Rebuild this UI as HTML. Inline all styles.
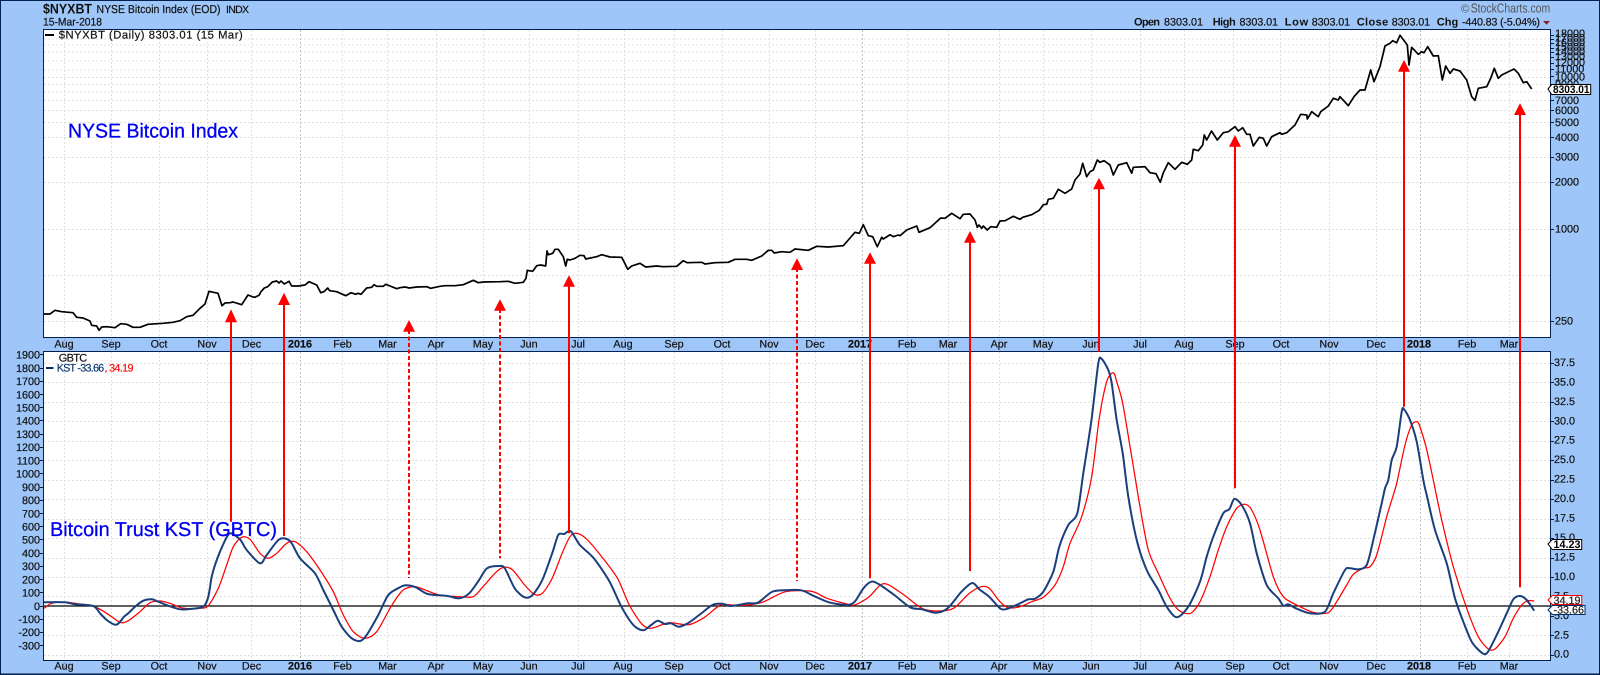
<!DOCTYPE html>
<html><head><meta charset="utf-8"><title>$NYXBT</title>
<style>
html,body{margin:0;padding:0;background:#9fc6f9;width:1600px;height:675px;overflow:hidden}
svg{display:block;font-family:"Liberation Sans",Arial,sans-serif;text-rendering:geometricPrecision}
.g{fill:none;stroke:#e0e0e0;stroke-width:1;stroke-dasharray:2 2}
.y{fill:none;stroke:#c0c0c0;stroke-width:1;stroke-dasharray:2 2}
.a text,.a{font-size:10.8px;fill:#111;stroke:#111;stroke-width:.2px}
.t{stroke:#111;stroke-width:.2px}
.m{text-anchor:middle}
.r{text-anchor:end}
.b{font-weight:bold}
.ar{fill:#f00}
.sh{stroke:#f00;stroke-width:2;fill:none}
.da{stroke-dasharray:4 2.5}
.big{stroke:#0000f0;stroke-width:.3px}
</style></head><body>
<svg width="1600" height="675" viewBox="0 0 1600 675" xmlns="http://www.w3.org/2000/svg">
<rect x="0" y="0" width="1600" height="675" fill="#9fc6f9"/>
<rect x="0.5" y="0.5" width="1599" height="673.5" fill="none" stroke="#002050" stroke-width="1"/>
<line x1="0" y1="674.5" x2="1600" y2="674.5" stroke="#002050" stroke-width="1"/>

<!-- panels -->
<rect x="43.5" y="29.5" width="1507" height="308" fill="#fff" stroke="#002050" stroke-width="1"/>
<rect x="43.5" y="351.5" width="1507" height="309" fill="#fff" stroke="#002050" stroke-width="1"/>

<!-- grid upper -->
<path class="g" d="M44 39H1550M44 45H1550M44 52H1550M44 61H1550M44 70H1550M44 77.5H1550M44 84.5H1550M44 92H1550M44 100.5H1550M44 110.5H1550M44 122.5H1550M44 137.5H1550M44 157.5H1550M44 182.5H1550M44 229.5H1550M44 275.5H1550M44 321.5H1550"/>
<path class="g" d="M64.5 30V337M111.5 30V337M159.5 30V337M207.5 30V337M251.5 30V337M342.5 30V337M387.5 30V337M436.5 30V337M483.5 30V337M529.5 30V337M578.5 30V337M624.5 30V337M674.5 30V337M722.5 30V337M769.5 30V337M815.5 30V337M907.5 30V337M948.5 30V337M999.5 30V337M1043.5 30V337M1091.5 30V337M1140.5 30V337M1184.5 30V337M1233.5 30V337M1280.5 30V337M1329.5 30V337M1376.5 30V337M1467.5 30V337M1509.5 30V337"/>
<path class="y" d="M300.5 30V337M862.5 30V337M1420.5 30V337"/>
<!-- grid lower -->
<path class="g" d="M44 363.5H1550M44 382.5H1550M44 402.5H1550M44 421.5H1550M44 441.5H1550M44 460.5H1550M44 480.5H1550M44 499.5H1550M44 519.5H1550M44 538.5H1550M44 558.5H1550M44 577.5H1550M44 596.5H1550M44 616.5H1550M44 635.5H1550M44 655.5H1550"/>
<path class="g" d="M64.5 352V660M111.5 352V660M159.5 352V660M207.5 352V660M251.5 352V660M342.5 352V660M387.5 352V660M436.5 352V660M483.5 352V660M529.5 352V660M578.5 352V660M624.5 352V660M674.5 352V660M722.5 352V660M769.5 352V660M815.5 352V660M907.5 352V660M948.5 352V660M999.5 352V660M1043.5 352V660M1091.5 352V660M1140.5 352V660M1184.5 352V660M1233.5 352V660M1280.5 352V660M1329.5 352V660M1376.5 352V660M1467.5 352V660M1509.5 352V660"/>
<path class="y" d="M300.5 352V660M862.5 352V660M1420.5 352V660"/>

<!-- zero line -->
<line x1="44" y1="606" x2="1550" y2="606" stroke="#000" stroke-width="1.2"/>

<!-- price line -->
<polyline fill="none" stroke="#000" stroke-width="1.7" stroke-linejoin="round" points="44,314 50,314 55,310.3 61.7,311.7 73,312.7 76.7,317.3 83,318 90,321 91.7,325.3 96.7,326 99,330.3 101.7,327 106.7,326.7 115,327.7 120.7,323.7 126.7,324.3 133,327.3 140,327.3 148,324.3 163,323.3 173,322.3 180,320.7 186.7,316.7 193,315.3 200,308.3 205,304 209,291.3 218,293.3 222,305.7 225,303 230,302.7 233,302 241.7,304.7 248,295 253,297 255,297.3 259,295.3 261,291.7 264.3,288 267.7,286.7 272.3,282 276.7,281 279,283 281,281 284.3,284 289,281.3 291.7,286 298.3,286 305,285 309,281.7 316.7,285 320.7,292.7 324,291.7 327.7,288 329.7,290.7 336.7,291.7 345.7,295.7 351,292.7 355.7,294.3 358,293.3 361,294.3 366.7,288 371.7,287.3 374,284.7 376.7,286.3 383.3,286.3 385.7,284.3 390,286 396.7,288.7 400,287.7 405,287 409.3,288 416.7,287 426.7,286.7 430.7,288.3 440,286.3 445,285.7 455,285.7 463.3,284.7 473.3,280.3 478.3,282.7 483.3,282 500,281.7 508.3,281.3 515,283.3 523.3,282.3 526,278.3 527.3,270.3 532.7,271.3 536.7,265.7 540.7,265 545.7,266 547,251 548.3,254.7 552.7,253.3 555,249.3 558.3,249.3 563.3,256.7 565.7,266 567.3,259.3 570,260 575,258.3 580,255.3 584,255.7 585.7,259 596.7,256.7 601.7,254.7 610,257 621.7,257.3 624,261.7 627.7,269.3 631.7,266 640,263.3 645.7,267 656.7,266 663,266.7 676.7,266.3 683.3,260.7 687.3,262.7 701.7,262.3 705,264 715,262.7 728.3,262.3 735,259.3 746.7,259.3 751.7,260.3 761.7,256 768.3,250.3 771.7,250.3 774.3,253 781.7,251.7 790,252.3 795,249 808.3,250.3 816.7,246.3 828.3,247 843.3,245.7 848.3,240 855,232.3 859.3,233.3 863.3,224.7 868.3,235.7 872.7,236.7 877.3,246.7 881.7,237.3 883.3,239 890,234.7 893.3,236.7 898.3,235 900,235.7 906.7,230 916.7,226 919,232.3 930,227.7 940.7,218 945,218.3 951.7,213.3 960,218.7 963.3,214.3 970,214 975,220 977.3,227.3 979,225 981.7,228.3 983.3,226 987.3,230 990.7,226.7 996.7,227.3 1000,221 1005,220.7 1013.3,216.3 1020,219.3 1022.7,217.3 1031.7,214.7 1039.3,210.3 1043.3,204.7 1046.7,204.3 1048.3,199.3 1053.3,198.3 1058.3,189.3 1065,193.3 1071.7,189 1075,180 1080,174 1082.7,163.3 1086.7,176.7 1090,171.7 1093.3,170 1097.3,160 1100,162.3 1104,160.7 1110,165 1113.3,175 1118.3,165 1126.7,162.7 1131.7,173.3 1133.3,167.3 1145,166.7 1150,172.7 1156,173.7 1160.3,182.3 1163.3,172.7 1168.3,162.7 1175,169.3 1181.7,162.3 1187.3,164.3 1191.7,160 1193.3,149.3 1198.3,150.7 1202.7,145 1204.3,135 1206.7,140 1211.5,131 1217.3,140 1223.3,132.7 1228.3,131.7 1235,126.7 1238.3,131 1242.7,127.7 1246.7,134.3 1250,134.3 1253.3,146 1259.3,137.3 1263.3,138.3 1266.7,146 1271.7,136.7 1280,132.7 1281.7,134.3 1286.7,132.7 1295,125 1300.7,114.3 1306.7,115 1307.3,119 1311.7,111.7 1318.3,116.7 1320.7,111.7 1328.3,106 1333.3,98.3 1338.3,100 1340,96.7 1348.3,105.7 1354,96.7 1360,90 1365,90 1370.7,70 1374,81.7 1380,66.7 1385,46 1390,43.3 1392.7,40.7 1396.7,42.7 1400,35.3 1407.3,45 1409,65 1411.7,47.3 1418.3,54.3 1421.7,51.7 1424,52.7 1427.7,46.7 1433.3,56 1438.3,55.7 1442.3,80 1445.7,66 1450,73.3 1453.3,69 1460,71 1466.7,80 1471.7,96.7 1475,100.3 1478.3,88.3 1486.7,86.7 1490.7,78.3 1494.3,68.3 1498.3,78.3 1501.7,75 1514,69 1518.3,73.3 1523.3,82.7 1526.7,81.7 1531.7,89"/>

<!-- red KST signal -->
<polyline class="sm" fill="none" stroke="#f00" stroke-width="1.25" stroke-linejoin="round" points="44,608.3 50,604 56.7,602.3 66.7,602.3 80,604 93.3,606 106.7,613.3 120,622.3 128.3,620.7 140,611.7 150,602.7 160,601 170,603.3 183.3,608.3 200,608.3 208.3,605.7 218.3,588.3 226.7,565 233.3,546.7 241.7,537.3 250,539.3 260,553.3 268.3,558.3 276.7,553.3 286.7,543.3 295,541.7 306.7,551.7 320,570 333.3,591.7 343.3,615 353.3,631.7 365,638.3 376.7,631.7 390,608.3 400,593.3 406,588.3 415.8,586.7 427.7,591 439.5,595 459.3,596.7 473.2,596.7 483,586.7 494.9,573.3 503.6,567.3 512.7,570 524.6,585 534.4,594.3 542.3,593.3 552.2,578.3 562.1,553.3 570,536.7 576,533.3 585.8,538.3 601.7,556.7 617.5,578.3 629.3,605 641.2,623.3 649.1,628.3 657,626.7 668.9,622.7 688.7,624.7 704.5,617.3 720.3,605 732.1,605 748,605 763.8,601.7 785.5,591.7 811.2,591.3 827,598.3 846.8,604 854.7,605 868.6,597.3 880.4,585 888.3,584.7 904.1,595 921.9,608.3 937.8,611 953.6,608.3 969.4,593.3 981.3,586.7 989.2,588.3 1000,601.7 1008.3,607.7 1020,606.7 1031.7,601.7 1043.3,597.3 1055,585 1063.3,566.7 1070,543.3 1081.7,516.7 1091.7,476.7 1099,420 1106.7,381.7 1113.3,372.7 1116.7,381.7 1122.7,403.3 1131.7,456.7 1140,506.7 1148.3,550 1158.3,573.3 1168.3,595 1176.7,608.3 1185,613.3 1191.7,612.7 1200,601.7 1210,576.7 1218.3,550 1226.7,526.7 1236.7,508.3 1245,504.3 1251.7,510 1260,530 1273.3,576.7 1283.3,596.7 1296.7,605 1313.3,612.3 1328.3,612.7 1336.7,601.7 1346.7,585 1353.3,574.3 1363.3,568.3 1370,566.7 1376.7,555 1386.7,516.7 1390.7,503.3 1396.7,483.3 1405,445 1411.7,425 1416.7,421.7 1419.3,425 1426,446.7 1433.3,480 1441.7,520 1453.3,566.7 1466.7,608.3 1478.3,636.7 1488.3,649 1495,649 1505,636.7 1513.3,618.3 1521.7,605 1528.3,600.7 1534.3,601"/>

<!-- navy KST -->
<polyline class="sm" fill="none" stroke="#1a3f7c" stroke-width="2" stroke-linejoin="round" points="44,602.3 65,602.3 75,604.3 93.3,606 100,613.3 106.7,620 115,624.7 119.3,622.7 124,616.7 128.3,613.3 135,606.7 143.3,600.7 151.7,599.3 158.3,601.7 168.3,605.7 180,609.3 190,609 203.3,606.7 208.3,596.7 211.7,576.7 215,565 220,551.7 226.7,537.3 230.7,533.3 240,539.3 246.7,550 260,563.3 266.7,555 279.3,539.3 290,541 300,558.3 315,573.3 323.3,590 333.3,610 341.7,626.7 351.7,638.3 360,641 366.7,635 378.3,615 388.3,595 400,587.3 406,585.3 415.8,587.3 427.7,594 447.4,596 459.3,598.3 469.2,593.3 479.1,580 487,568.3 498.9,566 504.8,568.3 514.7,588.3 524.6,597.3 532.5,595 542.3,580 552.2,553.3 558.2,535 564.1,534 570.8,531.3 579.9,545 593.8,558.3 609.6,581.7 621.4,606.7 633.3,625 643.2,630.3 651.1,625 657.8,620.7 664.9,624 670.9,623.3 678.8,626.7 688.7,622.7 700.5,614 712.4,605 722.3,603.7 730.2,606 748,603.3 757.8,602.7 771.7,592 783.5,590.3 801.3,590.3 813.2,595.7 829,602.3 846.8,605 854.7,601.7 863.4,588.3 871.3,581.7 878.5,584 894.3,595 910.1,607.3 921.9,609.3 935.8,612.7 947.6,608.3 961.5,591.7 972.2,583 979.3,589.3 989.2,596.7 1000,608.3 1006.7,609 1020,603.3 1028.3,599.3 1035,598.7 1043.3,591.7 1053.3,571.7 1059.3,546.7 1068.3,525 1077.3,513.3 1083.3,473.3 1091.7,418.3 1098.3,363.3 1101.7,359 1108.3,370 1111.7,383.3 1116.7,420 1122.7,453.3 1128.3,496.7 1136.7,540 1146.7,570 1158.3,590 1166.7,606.7 1176.7,617.3 1188.3,606.7 1200,581.7 1206.7,556.7 1213.3,536.7 1223.3,513.3 1229.3,509.3 1234.3,499 1241.7,505 1250,523.3 1256.7,553.3 1266.7,585 1278.3,598.3 1283.3,605.7 1288.3,604.3 1296.7,608.7 1310,613.3 1325,611.7 1333.3,593.3 1345,570 1350,568.3 1358.3,569.3 1366.7,565 1373.3,540 1381.7,503.3 1385,488.3 1388.3,480 1391.7,460 1396.7,446.7 1401.7,411.7 1404,409.3 1410,420 1416.7,441.7 1423.3,480 1426.7,495 1435,530 1446.7,563.3 1455,598.3 1463.3,621.7 1471.7,641.7 1481.7,652.7 1487.3,652.7 1496.7,635 1506.7,613.3 1513.3,599.3 1520,596 1526.7,600 1534.3,610.7"/>

<!-- ticks -->
<path fill="none" stroke="#002050" stroke-width="1" d="M40 354.5h3M40 368.5h3M40 381.5h3M40 394.5h3M40 407.5h3M40 420.5h3M40 434.5h3M40 447.5h3M40 460.5h3M40 473.5h3M40 487.5h3M40 500.5h3M40 513.5h3M40 526.5h3M40 539.5h3M40 553.5h3M40 566.5h3M40 579.5h3M40 592.5h3M40 606.5h3M40 619.5h3M40 632.5h3M40 645.5h3"/>
<path fill="none" stroke="#002050" stroke-width="1" d="M1551 363.5h3M1551 382.5h3M1551 402.5h3M1551 421.5h3M1551 441.5h3M1551 460.5h3M1551 480.5h3M1551 499.5h3M1551 519.5h3M1551 538.5h3M1551 558.5h3M1551 577.5h3M1551 596.5h3M1551 616.5h3M1551 635.5h3M1551 655.5h3"/>
<path fill="none" stroke="#002050" stroke-width="1" d="M1551 35.5h3M1551 39.5h3M1551 43.5h3M1551 48.5h3M1551 52.5h3M1551 57.5h3M1551 63.5h3M1551 69.5h3M1551 76.5h3M1551 84.5h3M1551 92.5h3M1551 100.5h3M1551 110.5h3M1551 122.5h3M1551 137.5h3M1551 157.5h3M1551 182.5h3M1551 229.5h3M1551 321.5h3"/>

<!-- header -->
<text x="43" y="13.5" font-size="14" font-weight="bold" fill="#111" textLength="49" lengthAdjust="spacingAndGlyphs">$NYXBT</text>
<text x="96.5" y="13" font-size="11.5" class="t" fill="#111" textLength="124" lengthAdjust="spacingAndGlyphs">NYSE Bitcoin Index (EOD)</text>
<text x="226" y="13" font-size="10.5" class="t" fill="#111" textLength="23">INDX</text>
<text x="43" y="25.7" font-size="11" class="t" fill="#111" textLength="59" lengthAdjust="spacingAndGlyphs">15-Mar-2018</text>
<text x="1461" y="12.7" font-size="11.5" fill="#555">©</text>
<text x="1470.7" y="12.7" font-size="13" fill="#555" textLength="79.5" lengthAdjust="spacingAndGlyphs">StockCharts.com</text>
<text x="1134" y="25.7" font-size="11" class="b" fill="#111" textLength="26">Open</text>
<text x="1164" y="25.7" font-size="10.8" class="t" fill="#111" textLength="39">8303.01</text>
<text x="1212.7" y="25.7" font-size="11" class="b" fill="#111" textLength="23">High</text>
<text x="1239.5" y="25.7" font-size="10.8" class="t" fill="#111" textLength="38.5">8303.01</text>
<text x="1284.7" y="25.7" font-size="11" class="b" fill="#111" textLength="23.5">Low</text>
<text x="1311.7" y="25.7" font-size="10.8" class="t" fill="#111" textLength="38.5">8303.01</text>
<text x="1356.7" y="25.7" font-size="11" class="b" fill="#111" textLength="31.5">Close</text>
<text x="1391.7" y="25.7" font-size="10.8" class="t" fill="#111" textLength="38.5">8303.01</text>
<text x="1436.7" y="25.7" font-size="11" class="b" fill="#111" textLength="21.5">Chg</text>
<text x="1462" y="25.7" font-size="10.8" class="t" fill="#111" textLength="78">-440.83 (-5.04%)</text>
<polygon points="1543,21 1550,21 1546.5,24.7" fill="#8b1a2b"/>

<!-- legends -->
<rect x="45" y="34" width="9" height="2" fill="#000"/>
<text x="58.7" y="38.7" font-size="11.2" class="t" fill="#111" textLength="184">$NYXBT (Daily) 8303.01 (15 Mar)</text>
<text x="58.7" y="361.7" font-size="11" class="t" fill="#111" textLength="28.5">GBTC</text>
<rect x="46" y="367" width="7.5" height="2" fill="#00306a"/>
<text x="56.7" y="371.7" font-size="10.8" fill="#00306a" stroke="#00306a" stroke-width=".15" textLength="47.5">KST -33.66</text>
<text x="104.5" y="371.7" font-size="10.8" fill="#f00" stroke="#f00" stroke-width=".15" textLength="29">, 34.19</text>

<!-- big labels -->
<text class="big" x="68" y="137.7" font-size="20" fill="#0000f0" textLength="170" lengthAdjust="spacingAndGlyphs">NYSE Bitcoin Index</text>
<text class="big" x="50" y="536" font-size="20" fill="#0000f0" textLength="227" lengthAdjust="spacingAndGlyphs">Bitcoin Trust KST (GBTC)</text>

<!-- month strip ticks -->
<path fill="none" stroke="#7f9cc4" stroke-width="1" stroke-dasharray="2 2" d="M64.5 339v7M111.5 339v7M159.5 339v7M207.5 339v7M251.5 339v7M342.5 339v7M387.5 339v7M436.5 339v7M483.5 339v7M529.5 339v7M578.5 339v7M624.5 339v7M674.5 339v7M722.5 339v7M769.5 339v7M815.5 339v7M907.5 339v7M948.5 339v7M999.5 339v7M1043.5 339v7M1091.5 339v7M1140.5 339v7M1184.5 339v7M1233.5 339v7M1280.5 339v7M1329.5 339v7M1376.5 339v7M1467.5 339v7M1509.5 339v7M64.5 662v7M111.5 662v7M159.5 662v7M207.5 662v7M251.5 662v7M342.5 662v7M387.5 662v7M436.5 662v7M483.5 662v7M529.5 662v7M578.5 662v7M624.5 662v7M674.5 662v7M722.5 662v7M769.5 662v7M815.5 662v7M907.5 662v7M948.5 662v7M999.5 662v7M1043.5 662v7M1091.5 662v7M1140.5 662v7M1184.5 662v7M1233.5 662v7M1280.5 662v7M1329.5 662v7M1376.5 662v7M1467.5 662v7M1509.5 662v7"/>

<!-- month labels -->
<g class="a m">
<text x="64" y="347.3">Aug</text><text x="111" y="347.3">Sep</text><text x="159" y="347.3">Oct</text><text x="207" y="347.3">Nov</text><text x="251.5" y="347.3">Dec</text><text x="300" y="347.3" font-weight="bold" font-size="11.5">2016</text><text x="342.5" y="347.3">Feb</text><text x="387.5" y="347.3">Mar</text><text x="436" y="347.3">Apr</text><text x="483" y="347.3">May</text><text x="529" y="347.3">Jun</text><text x="578" y="347.3">Jul</text><text x="623" y="347.3">Aug</text><text x="674" y="347.3">Sep</text><text x="722" y="347.3">Oct</text><text x="769" y="347.3">Nov</text><text x="815" y="347.3">Dec</text><text x="860" y="347.3" font-weight="bold" font-size="11.5">2017</text><text x="907" y="347.3">Feb</text><text x="948" y="347.3">Mar</text><text x="999" y="347.3">Apr</text><text x="1043" y="347.3">May</text><text x="1091" y="347.3">Jun</text><text x="1140" y="347.3">Jul</text><text x="1184" y="347.3">Aug</text><text x="1235" y="347.3">Sep</text><text x="1281" y="347.3">Oct</text><text x="1329" y="347.3">Nov</text><text x="1376" y="347.3">Dec</text><text x="1419" y="347.3" font-weight="bold" font-size="11.5">2018</text><text x="1467" y="347.3">Feb</text><text x="1509" y="347.3">Mar</text>
<text x="64" y="669.3">Aug</text><text x="111" y="669.3">Sep</text><text x="159" y="669.3">Oct</text><text x="207" y="669.3">Nov</text><text x="251.5" y="669.3">Dec</text><text x="300" y="669.3" font-weight="bold" font-size="11.5">2016</text><text x="342.5" y="669.3">Feb</text><text x="387.5" y="669.3">Mar</text><text x="436" y="669.3">Apr</text><text x="483" y="669.3">May</text><text x="529" y="669.3">Jun</text><text x="578" y="669.3">Jul</text><text x="623" y="669.3">Aug</text><text x="674" y="669.3">Sep</text><text x="722" y="669.3">Oct</text><text x="769" y="669.3">Nov</text><text x="815" y="669.3">Dec</text><text x="860" y="669.3" font-weight="bold" font-size="11.5">2017</text><text x="907" y="669.3">Feb</text><text x="948" y="669.3">Mar</text><text x="999" y="669.3">Apr</text><text x="1043" y="669.3">May</text><text x="1091" y="669.3">Jun</text><text x="1140" y="669.3">Jul</text><text x="1184" y="669.3">Aug</text><text x="1235" y="669.3">Sep</text><text x="1281" y="669.3">Oct</text><text x="1329" y="669.3">Nov</text><text x="1376" y="669.3">Dec</text><text x="1419" y="669.3" font-weight="bold" font-size="11.5">2018</text><text x="1467" y="669.3">Feb</text><text x="1509" y="669.3">Mar</text>
</g>

<!-- left axis -->
<g class="a r">
<text x="40" y="358.6">1900</text><text x="40" y="371.8">1800</text><text x="40" y="385.1">1700</text><text x="40" y="398.3">1600</text><text x="40" y="411.5">1500</text><text x="40" y="424.7">1400</text><text x="40" y="437.9">1300</text><text x="40" y="451.2">1200</text><text x="40" y="464.4">1100</text><text x="40" y="477.6">1000</text><text x="40" y="490.8">900</text><text x="40" y="504">800</text><text x="40" y="517.3">700</text><text x="40" y="530.5">600</text><text x="40" y="543.7">500</text><text x="40" y="556.9">400</text><text x="40" y="570.1">300</text><text x="40" y="583.4">200</text><text x="40" y="596.6">100</text><text x="40" y="609.8">0</text><text x="40" y="623">-100</text><text x="40" y="636.2">-200</text><text x="40" y="649.5">-300</text>
</g>

<!-- right axis lower -->
<g class="a">
<text x="1554" y="366">37.5</text><text x="1554" y="385.4">35.0</text><text x="1554" y="404.9">32.5</text><text x="1554" y="424.3">30.0</text><text x="1554" y="443.7">27.5</text><text x="1554" y="463.2">25.0</text><text x="1554" y="482.6">22.5</text><text x="1554" y="502.1">20.0</text><text x="1554" y="521.6">17.5</text><text x="1554" y="541">15.0</text><text x="1554" y="560.5">12.5</text><text x="1554" y="579.9">10.0</text><text x="1554" y="599.4">7.5</text><text x="1554" y="618.8">5.0</text><text x="1554" y="638.3">2.5</text><text x="1554" y="657.7">0.0</text>
</g>
<!-- right axis upper -->
<g class="a">
<text x="1555" y="37">18000</text><text x="1555" y="41.5">17000</text><text x="1555" y="46">16000</text><text x="1555" y="50.5">15000</text><text x="1555" y="55">14000</text><text x="1555" y="60">13000</text><text x="1555" y="66">12000</text><text x="1555" y="72.5">11000</text><text x="1555" y="80.3">10000</text><text x="1555" y="88">9000</text><text x="1555" y="103.8">7000</text><text x="1555" y="113.8">6000</text><text x="1555" y="125.8">5000</text><text x="1555" y="141">4000</text><text x="1555" y="160.5">3000</text><text x="1555" y="185.5">2000</text><text x="1555" y="232.5">1000</text><text x="1555" y="324.5">250</text>
</g>

<!-- flags -->
<polygon points="1548,89 1551.7,84.5 1590.7,84.5 1590.7,94.5 1551.7,94.5" fill="#fff" stroke="#000" stroke-width="1"/>
<text x="1553" y="93" font-size="11" font-weight="bold" fill="#000" textLength="36.5" lengthAdjust="spacingAndGlyphs">8303.01</text>
<polygon points="1548,544 1552.3,539.5 1581.7,539.5 1581.7,549.5 1552.3,549.5" fill="#fff" stroke="#000" stroke-width="1"/>
<text x="1553.5" y="548" font-size="11" font-weight="bold" fill="#000" textLength="27" lengthAdjust="spacingAndGlyphs">14.23</text>
<polygon points="1548,600 1552.3,595.5 1581.7,595.5 1581.7,604.5 1552.3,604.5" fill="#fff" stroke="#f00" stroke-width="1"/>
<text x="1553.5" y="604" font-size="10.8" class="t" fill="#222" textLength="27">34.19</text>
<polygon points="1548,610 1552.3,605.5 1585,605.5 1585,614.5 1552.3,614.5" fill="#fff" stroke="#00306a" stroke-width="1"/>
<text x="1553.5" y="613.5" font-size="10.8" class="t" fill="#222" textLength="30.5">-33.66</text>

<!-- arrows -->
<g>
<path class="sh" d="M231 320V521.7"/><polygon class="ar" points="231,309.3 225,322.3 237,322.3"/>
<path class="sh" d="M284 303V536"/><polygon class="ar" points="284,292.7 278,305 290,305"/>
<path class="sh da" d="M409 330V578"/><polygon class="ar" points="409,320 403,331.7 415,331.7"/>
<path class="sh da" d="M500 309V558.3"/><polygon class="ar" points="500,299.3 494,310.7 506,310.7"/>
<path class="sh" d="M569 285V533.3"/><polygon class="ar" points="569,275.3 563,286.7 575,286.7"/>
<path class="sh da" d="M797 268V581"/><polygon class="ar" points="797,258.3 791,270 803,270"/>
<path class="sh" d="M870 262V578.3"/><polygon class="ar" points="870,252.3 864,263.7 876,263.7"/>
<path class="sh" d="M970 241V571"/><polygon class="ar" points="970,231 964,242.7 976,242.7"/>
<path class="sh" d="M1099 188V351.7"/><polygon class="ar" points="1099,177.7 1093,189.3 1105,189.3"/>
<path class="sh" d="M1235 145V488.3"/><polygon class="ar" points="1235,135 1229,146.7 1241,146.7"/>
<path class="sh" d="M1404 70V406.7"/><polygon class="ar" points="1404,60 1398,71.7 1410,71.7"/>
<path class="sh" d="M1520 113V587.3"/><polygon class="ar" points="1520,103.3 1514,115 1526,115"/>
</g>
</svg>
<script>
document.querySelectorAll('polyline.sm').forEach(function(l){
  var n=l.getAttribute('points').trim().split(/\s+/).map(function(s){return s.split(',').map(Number)});
  var d='M'+n[0][0]+' '+n[0][1];
  for(var i=0;i<n.length-1;i++){
    var a=n[Math.max(i-1,0)],b=n[i],c=n[i+1],e=n[Math.min(i+2,n.length-1)];
    var k=1/7;
    d+='C'+(b[0]+(c[0]-a[0])*k).toFixed(1)+' '+(b[1]+(c[1]-a[1])*k).toFixed(1)+' '+(c[0]-(e[0]-b[0])*k).toFixed(1)+' '+(c[1]-(e[1]-b[1])*k).toFixed(1)+' '+c[0]+' '+c[1];
  }
  var p=document.createElementNS('http://www.w3.org/2000/svg','path');
  p.setAttribute('d',d);
  ['fill','stroke','stroke-width','stroke-linejoin'].forEach(function(t){p.setAttribute(t,l.getAttribute(t))});
  l.parentNode.replaceChild(p,l);
});
</script>
</body></html>
